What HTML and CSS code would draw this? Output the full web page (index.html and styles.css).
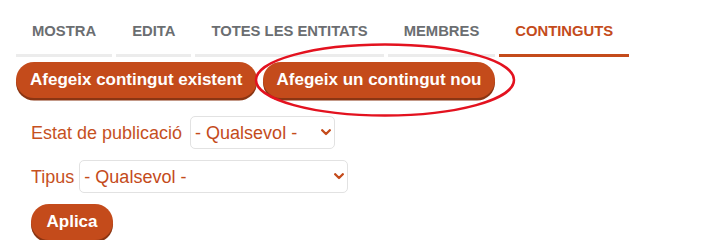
FILE: index.html
```html
<!DOCTYPE html>
<html lang="ca">
<head>
<meta charset="utf-8">
<title>Continguts</title>
<link rel="stylesheet" href="styles.css">
</head>
<body>
<div class="page">
  <nav class="tabs">
    <a class="tab" href="#">MOSTRA</a>
    <a class="tab" href="#">EDITA</a>
    <a class="tab" href="#">TOTES LES ENTITATS</a>
    <a class="tab" href="#">MEMBRES</a>
    <a class="tab active" href="#">CONTINGUTS</a>
  </nav>
  <div class="actions">
    <a class="btn" href="#">Afegeix contingut existent</a>
    <a class="btn" href="#">Afegeix un contingut nou</a>
  </div>
  <form class="filters">
    <div class="field field-wide-gap">
      <label for="estat">Estat de publicació</label>
      <span class="select-wrap">
        <select id="estat" class="select select-short"><option>- Qualsevol -</option></select>
        <svg class="chev" viewBox="0 0 10 7" width="10" height="7"><path d="M1.2 1.2 L5 5 L8.8 1.2"/></svg>
      </span>
    </div>
    <div class="field">
      <label for="tipus">Tipus</label>
      <span class="select-wrap">
        <select id="tipus" class="select select-long"><option>- Qualsevol -</option></select>
        <svg class="chev" viewBox="0 0 10 7" width="10" height="7"><path d="M1.2 1.2 L5 5 L8.8 1.2"/></svg>
      </span>
    </div>
    <div class="submit-row">
      <button type="button" class="btn btn-apply">Aplica</button>
    </div>
  </form>
</div>
<svg class="annotation" viewBox="0 0 262 76" width="262" height="76"><ellipse cx="131" cy="38" rx="129" ry="35.5"/></svg>
</body>
</html>
```
FILE: styles.css
```css
html, body {
  margin: 0;
  padding: 0;
  background: #ffffff;
}
body {
  font-family: "Liberation Sans", Arial, sans-serif;
  position: relative;
}
.page {
  padding: 8px 16px 0 16px;
}
.tabs {
  display: flex;
  gap: 4px;
}
.tab {
  display: block;
  padding: 14px 16px 13px 16px;
  font-size: 14.8px;
  line-height: 19px;
  font-weight: 700;
  color: #6b6e71;
  text-decoration: none;
  border-bottom: 3px solid #ececec;
}
.tab.active {
  color: #c44b1b;
  border-bottom-color: #c44b1b;
}
.actions {
  display: flex;
  gap: 6px;
  margin-top: 5px;
}
.btn {
  display: inline-block;
  background: #c44b1b;
  color: #ffffff;
  font-family: "Liberation Sans", Arial, sans-serif;
  font-weight: 700;
  font-size: 17px;
  line-height: 20px;
  padding: 8px 14px;
  border: none;
  border-radius: 20px;
  box-shadow: 0 2.5px 0 #8a3513;
  text-decoration: none;
}
.filters {
  padding-left: 15px;
  margin-top: 18px;
}
.field {
  display: flex;
  align-items: baseline;
  gap: 5px;
  font-size: 18px;
  color: #c6511f;
}
.field-wide-gap {
  gap: 8px;
}
.field + .field {
  margin-top: 11px;
}
.select-wrap {
  position: relative;
  display: inline-block;
}
.select {
  appearance: none;
  -webkit-appearance: none;
  height: 33px;
  font-family: "Liberation Sans", Arial, sans-serif;
  font-size: 18px;
  color: #c44b1b;
  background: #ffffff;
  border: 1px solid #e2e2e2;
  border-radius: 5px;
  padding: 0 0 0 4px;
  margin: 0;
}
.select-short {
  width: 145px;
}
.select-long {
  width: 269px;
}
.chev {
  position: absolute;
  right: 4px;
  top: 50%;
  margin-top: -3.5px;
  fill: none;
  stroke: #c44b1b;
  stroke-width: 2.3;
  stroke-linecap: round;
  stroke-linejoin: round;
  pointer-events: none;
}
.submit-row {
  margin-top: 11px;
}
.btn-apply {
  padding: 8px 15.5px;
  cursor: pointer;
}
.annotation {
  position: absolute;
  left: 254px;
  top: 42px;
  fill: none;
  stroke: #e3121f;
  stroke-width: 2.5;
  pointer-events: none;
}
```
